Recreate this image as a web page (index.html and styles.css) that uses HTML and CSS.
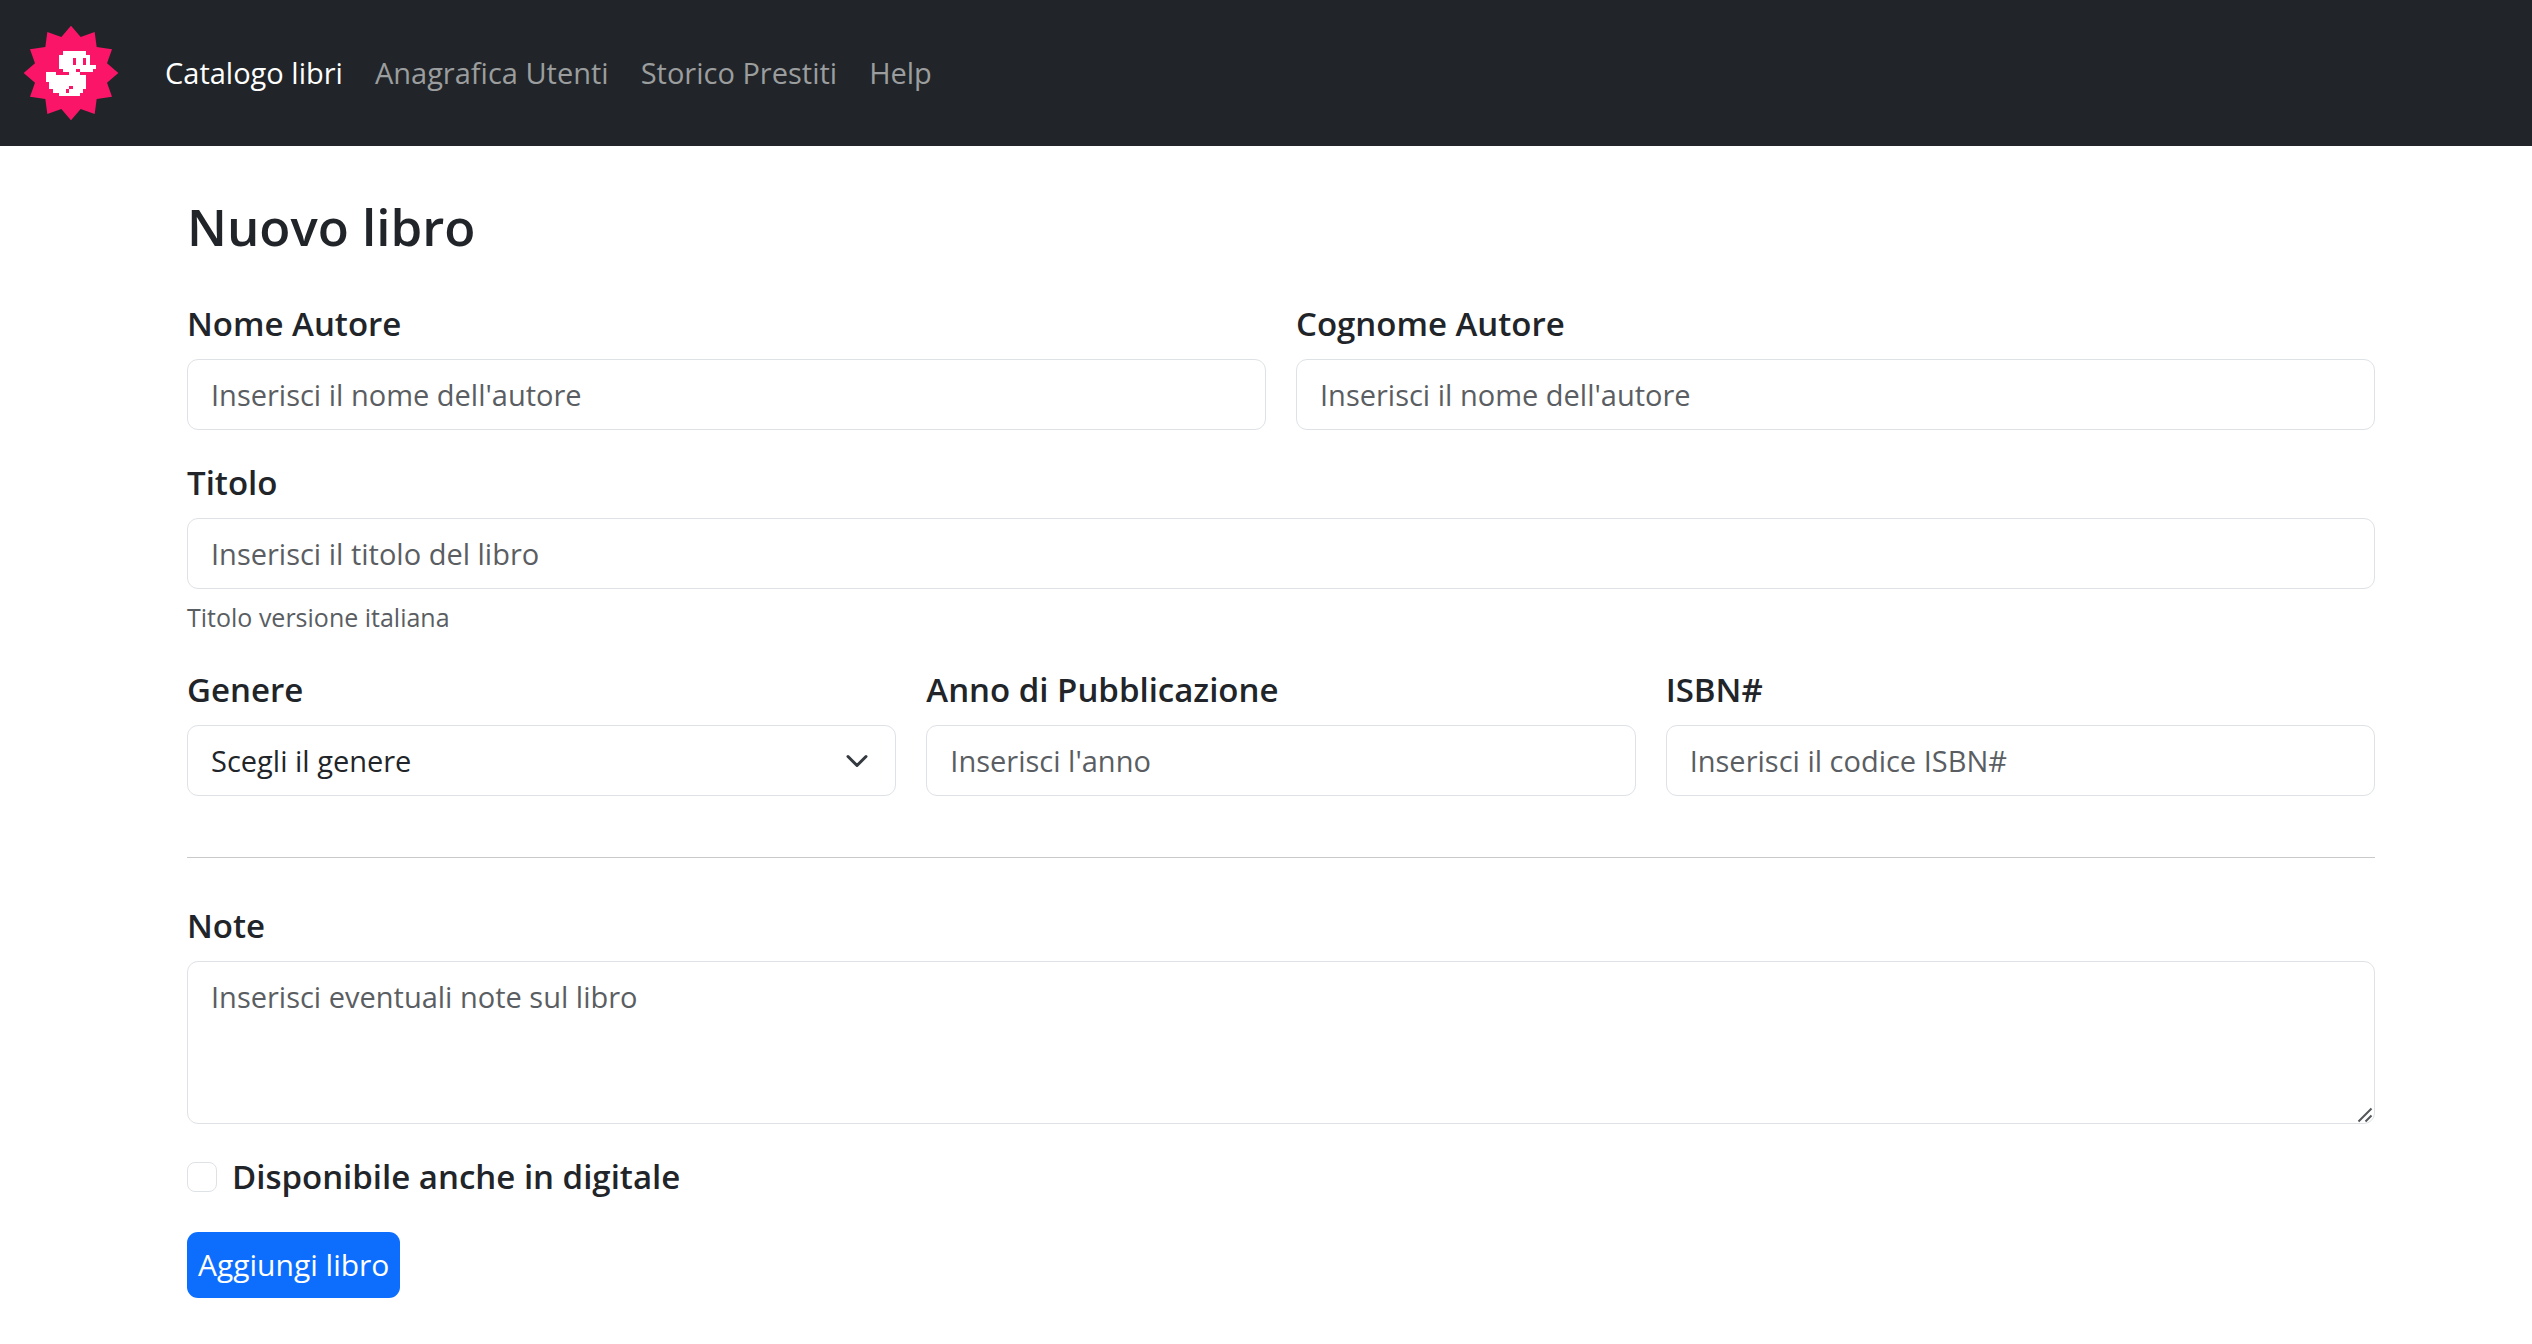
FILE: index.html
```html
<!DOCTYPE html>
<html lang="it">
<head>
<meta charset="utf-8">
<meta name="viewport" content="width=device-width, initial-scale=1">
<title>Nuovo libro</title>
<link rel="stylesheet" href="styles.css">
</head>
<body>
<header class="navbar">
  <a class="brand" href="#" aria-label="Home">
    <svg class="logo" viewBox="-144 -144 288 288" aria-hidden="true">
      <path fill="#fb1569" d="M0-142 29-108 71-123 77-78 123-71 108-29 142 0 108 29 123 71 77 78 71 123 29 108 0 142-29 108-71 123-77 78-123 71-108 29-142 0-108-29-123-71-77-78-71-123-29-108Z"/>
      <g transform="translate(-75 -65) scale(10.05 10.3)" shape-rendering="crispEdges">
        <path fill="#fff" d="M5 0H12V1H13V4H15V5H14V6H10V7H12V11H11V12H10V13H4V12H2V11H1V9H0V6H3V7H7V6H5V5H4V1H5Z"/>
        <path fill="#fb1569" d="M8 2H9V4H8ZM11 2H12V4H11ZM9 5H10V6H9ZM7 10H8V11H7ZM6 11H7V12H6Z"/>
      </g>
    </svg>
  </a>
  <nav class="nav">
    <a class="nav-link active" href="#" aria-current="page">Catalogo libri</a>
    <a class="nav-link" href="#">Anagrafica Utenti</a>
    <a class="nav-link" href="#">Storico Prestiti</a>
    <a class="nav-link" href="#">Help</a>
  </nav>
</header>

<main class="container">
  <h1 class="title">Nuovo libro</h1>
  <form class="form">
    <div class="row">
      <div class="field">
        <label class="label" for="nome">Nome Autore</label>
        <input class="control" id="nome" type="text" placeholder="Inserisci il nome dell'autore">
      </div>
      <div class="field">
        <label class="label" for="cognome">Cognome Autore</label>
        <input class="control" id="cognome" type="text" placeholder="Inserisci il nome dell'autore">
      </div>
    </div>
    <div class="field">
      <label class="label" for="titolo">Titolo</label>
      <input class="control" id="titolo" type="text" placeholder="Inserisci il titolo del libro" aria-describedby="titolo-help">
      <div class="hint" id="titolo-help">Titolo versione italiana</div>
    </div>
    <div class="row">
      <div class="field">
        <label class="label" for="genere">Genere</label>
        <div class="overlay-box">
          <select class="control" id="genere">
            <option>Scegli il genere</option>
          </select>
          <svg class="chevron" viewBox="0 0 16 16" aria-hidden="true"><path fill="none" stroke="#343a40" stroke-width="2" stroke-linecap="round" stroke-linejoin="round" d="m2 5 6 6 6-6"/></svg>
        </div>
      </div>
      <div class="field">
        <label class="label" for="anno">Anno di Pubblicazione</label>
        <input class="control" id="anno" type="text" placeholder="Inserisci l'anno">
      </div>
      <div class="field">
        <label class="label" for="isbn">ISBN#</label>
        <input class="control" id="isbn" type="text" placeholder="Inserisci il codice ISBN#">
      </div>
    </div>
    <hr class="divider">
    <div class="field">
      <label class="label" for="note">Note</label>
      <div class="overlay-box">
        <textarea class="control notes" id="note" rows="3" placeholder="Inserisci eventuali note sul libro"></textarea>
        <svg class="grip" viewBox="0 0 16 16" aria-hidden="true"><path fill="none" stroke="#55585b" stroke-width="2" d="M1.500 14.500 14.500 1.500M8.500 14.500 14.500 8.500"/></svg>
      </div>
    </div>
    <div class="check">
      <input class="check-input" id="digitale" type="checkbox">
      <label class="check-label" for="digitale">Disponibile anche in digitale</label>
    </div>
    <button class="button" type="submit">Aggiungi libro</button>
  </form>
</main>
</body>
</html>
```
FILE: styles.css
```css
* {
  box-sizing: border-box;
}

body {
  margin: 0;
  background: #fff;
  color: #212529;
  font-family: "Open Sans", "Noto Sans", sans-serif;
  font-size: 29px;
  line-height: 46px;
}

.navbar {
  display: flex;
  align-items: center;
  gap: 30px;
  padding: 25px 23px;
  background: #212529;
}

.brand,
.logo {
  display: block;
  width: 96px;
  height: 96px;
}

.nav {
  display: flex;
}

.nav-link {
  padding: 0 16px;
  color: #9b9d9e;
  text-decoration: none;
}

.nav-link.active {
  color: #fff;
}

.container {
  padding: 48px 157px 46px 187px;
}

.title {
  margin: 0 0 40px;
  font-size: 51px;
  font-weight: 600;
  line-height: 64px;
}

.form {
  display: flex;
  flex-direction: column;
  gap: 27px;
}

.row {
  display: flex;
  gap: 30px;
}

.field {
  flex: 1;
  min-width: 0;
}

.label,
.check-label {
  font-size: 33px;
  font-weight: 600;
  line-height: 52px;
}

.label {
  display: block;
  margin-bottom: 9px;
}

.control {
  display: block;
  width: 100%;
  height: 71px;
  margin: 0;
  padding: 12px 23px;
  border: 1px solid #dee2e6;
  border-radius: 11px;
  background: #fff;
  color: #212529;
  font: inherit;
  appearance: none;
}

.control::placeholder {
  color: #5a5e62;
  opacity: 1;
}

.hint {
  margin-top: 9px;
  color: #5a5e62;
  font-size: 25px;
  line-height: 39px;
}

.overlay-box {
  position: relative;
}

.chevron {
  position: absolute;
  top: 24px;
  right: 27px;
  width: 24px;
  height: 24px;
  pointer-events: none;
}

.divider {
  width: 100%;
  margin: 34px 0 15px;
  border: 0;
  border-top: 1px solid #c8c9ca;
}

.notes {
  height: 163px;
  resize: vertical;
}

.notes::-webkit-resizer {
  display: none;
}

.grip {
  position: absolute;
  right: 2px;
  bottom: 1px;
  width: 16px;
  height: 16px;
  pointer-events: none;
}

.check {
  display: flex;
  align-items: center;
  gap: 15px;
}

.check-input {
  width: 30px;
  height: 30px;
  margin: 0;
  border: 1px solid #dee2e6;
  border-radius: 8px;
  background: #fff;
  appearance: none;
}

.check-input:checked {
  border-color: #0d6efd;
  background: #0d6efd;
}

.button {
  align-self: flex-start;
  margin-top: 2px;
  padding: 10px 11px;
  border: 0;
  border-radius: 11px;
  background: #0d6efd;
  color: #fff;
  font: inherit;
  font-size: 30px;
}
```
